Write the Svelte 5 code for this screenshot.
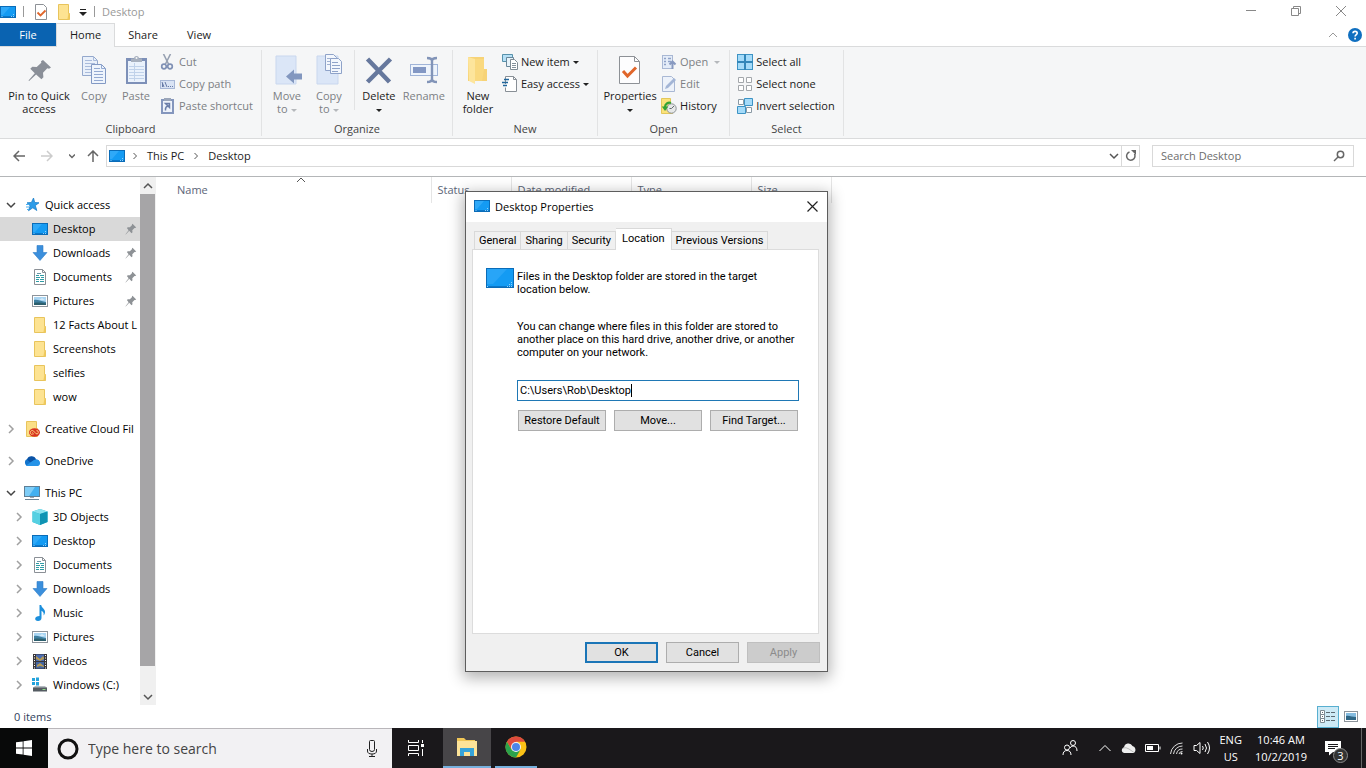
<script>
	// --------------- Sidebar ---------------
	let navGroups = [
		{
			name: 'Quick access', icon: 'star', open: true,
			items: [
				{ name: 'Desktop', icon: 'desktop', pinned: true, selected: true },
				{ name: 'Downloads', icon: 'download', pinned: true },
				{ name: 'Documents', icon: 'document', pinned: true },
				{ name: 'Pictures', icon: 'picture', pinned: true },
				{ name: '12 Facts About L', icon: 'folder' },
				{ name: 'Screenshots', icon: 'folder' },
				{ name: 'selfies', icon: 'folder' },
				{ name: 'wow', icon: 'folder' }
			]
		},
		{ name: 'Creative Cloud Fil', icon: 'creative', open: false, items: [] },
		{ name: 'OneDrive', icon: 'onedrive', open: false, items: [] },
		{
			name: 'This PC', icon: 'pc', open: true,
			items: [
				{ name: '3D Objects', icon: 'cube', expands: true },
				{ name: 'Desktop', icon: 'desktop', expands: true },
				{ name: 'Documents', icon: 'document', expands: true },
				{ name: 'Downloads', icon: 'download', expands: true },
				{ name: 'Music', icon: 'music', expands: true },
				{ name: 'Pictures', icon: 'picture', expands: true },
				{ name: 'Videos', icon: 'video', expands: true },
				{ name: 'Windows (C:)', icon: 'drive', expands: true }
			]
		}
	];
	// ---------------------------------------

	// --------------- Dialog ----------------
	let dialogTabs = ['General', 'Sharing', 'Security', 'Location', 'Previous Versions'];
	let activeTab = $state('Location');
	let path = $state('C:\\Users\\Rob\\Desktop');
	// ---------------------------------------
</script>

{#snippet icon(name)}
	{#if name === 'desktop'}
		<svg width="16" height="16" viewBox="0 0 16 16">
			<rect x="0.5" y="2.5" width="15" height="11" fill="#149bf3" stroke="#0a6cb8" />
			<path d="M1 3h9L3 11H1z" fill="#2fa9f8" />
			<path d="M1 12.5h14" stroke="#0c77c8" />
			<path d="M1.500 12.500h1M11 12.500h1M13 12.500h1M13 10.500h1" stroke="#8fd0fb" />
		</svg>
	{:else if name === 'star'}
		<svg width="16" height="16" viewBox="0 0 16 16">
			<path d="M9.500 1l1.200 4.500 4.300.3-3.700 2.700 1.500 5-4-2.700-4.300 2.900 1.600-4.900L3 5.800l4.400-.3z" fill="#2d9ce8" stroke="#1c7fc9" stroke-width=".8" />
			<path d="M2 7.500h3M2 10h3M3 12.500h2" stroke="#4db0ef" />
		</svg>
	{:else if name === 'download'}
		<svg width="16" height="16" viewBox="0 0 16 16">
			<path d="M5 .5h6v7h4L8 15.500 1 7.500h4z" fill="#3b8fdc" stroke="#2f7dc8" stroke-width=".6" />
		</svg>
	{:else if name === 'document'}
		<svg width="16" height="16" viewBox="0 0 16 16">
			<path d="M2.500.5h8l3 3v12h-11z" fill="#fff" stroke="#8b9096" />
			<path d="M10.500.5v3h3" fill="none" stroke="#8b9096" />
			<path d="M4 6.500h3M8 6.500h4M4 8.500h4M9 8.500h3M4 10.500h3M8 10.500h4M4 12.500h3M8 12.500h4" stroke="#2f9ca5" />
			<path d="M5 4.500h4" stroke="#6c97a5" />
		</svg>
	{:else if name === 'picture'}
		<svg width="16" height="16" viewBox="0 0 16 16">
			<rect x=".5" y="2.500" width="15" height="11" fill="#fff" stroke="#8d949b" />
			<rect x="2" y="4" width="12" height="8" fill="#a9d5f2" />
			<path d="M2 7c3-1 6 1 12 2v3H2z" fill="#3e7fa0" />
			<path d="M2 10c4-1 8 0 12 .5V12H2z" fill="#2c5f6d" />
			<path d="M7 6.500l3-1 3 1z" fill="#fff" />
		</svg>
	{:else if name === 'folder'}
		<svg width="16" height="16" viewBox="0 0 16 16">
			<path d="M2.500.5h10v9h1v6h-11z" fill="#fbdf86" stroke="#e8c45c" />
			<path d="M3 1h9v9l-1 5H3z" fill="#fde392" />
			<path d="M12.500 9.500h1v6h-2z" fill="#f0c95d" />
		</svg>
	{:else if name === 'creative'}
		<svg width="16" height="16" viewBox="0 0 16 16">
			<path d="M2.500.5h10v7h1v8h-11z" fill="#fbdf86" stroke="#e8c45c" />
			<ellipse cx="10.500" cy="11.500" rx="5.500" ry="4.200" fill="#d93420" />
			<path d="M8.500 13.500a2 2 0 1 1 1.200-3.400l2.300 2.600a1.600 1.600 0 1 0 .4-3M8 11.500l1.800 1.600" fill="none" stroke="#fbdf86" stroke-width=".9" />
		</svg>
	{:else if name === 'onedrive'}
		<svg width="16" height="16" viewBox="0 0 16 16">
			<path d="M4 13a3.600 3.600 0 0 1-.5-7A4.800 4.800 0 0 1 12 6.500a3.300 3.300 0 0 1 1 6.500z" fill="#1173cc" />
			<path d="M3 6.500A4.800 4.800 0 0 1 12 6.300L6.500 9.500z" fill="#0a52a5" />
			<path d="M2 12.500l8-5.500c3-1.500 6 .5 6 3a3 3 0 0 1-3 3H4q-1 0-2-.5z" fill="#2593e8" />
		</svg>
	{:else if name === 'pc'}
		<svg width="16" height="16" viewBox="0 0 16 16">
			<rect x=".5" y="1.500" width="15" height="10" fill="#42b0f0" stroke="#5f7f96" />
			<path d="M1 2h10L5 11H1z" fill="#7fcdf7" />
			<path d="M6 12.500h4" stroke="#9aa7b1" />
			<path d="M1 14.500h14" stroke="#6d8596" />
		</svg>
	{:else if name === 'cube'}
		<svg width="16" height="16" viewBox="0 0 16 16">
			<path d="M8 0l7.500 2.500V13L8 16 .5 13V2.500z" fill="#22b5cf" />
			<path d="M.5 2.500L8 0l7.500 2.500L8 5z" fill="#8be3ef" />
			<path d="M.5 2.500L8 5v11L.5 13z" fill="#55d0e2" />
			<path d="M8 5l7.500-2.500V13L8 16z" fill="#0f93b3" />
		</svg>
	{:else if name === 'music'}
		<svg width="16" height="16" viewBox="0 0 16 16">
			<path d="M7.500 0h1.700c.3 3 4.300 4 3.800 7.500-.2 1.500-1 2.500-1.500 3 .8-2.500-.5-4-2-4.700V13c0 1.700-1.500 3-3.500 3S3 15 3.200 13.500 5 11 7.500 11z" fill="#1c8fdc" />
		</svg>
	{:else if name === 'video'}
		<svg width="16" height="16" viewBox="0 0 16 16">
			<rect x="1" y="1" width="14" height="15" fill="#39373a" />
			<rect x="4" y="1.500" width="8" height="6.500" fill="#4a6cb3" />
			<rect x="4" y="9" width="8" height="6.500" fill="#4366a4" />
			<path d="M4 3l4 3 3-3 1 2v1l-4 2-4-2zM5 12l3-2 4 3v1l-4-1-3 1z" fill="#b59a55" />
			<path d="M2.500 2v14M13.500 2v14" stroke="#fff" stroke-dasharray="1 1.500" />
		</svg>
	{:else if name === 'drive'}
		<svg width="16" height="16" viewBox="0 0 16 16">
			<path d="M0 1h3v3H0zM4 .5h3V4H4zM0 5h3v3H0zM4 5h3v3.500H4z" fill="#24a3dc" />
			<path d="M3 9h10l2 2H1z" fill="#b6bcc2" />
			<rect x="1" y="10.500" width="14" height="4" fill="#555c62" />
			<rect x="10.500" y="12" width="3" height="1" fill="#8fe08a" />
		</svg>
	{:else if name === 'pin'}
		<svg width="12" height="12" viewBox="0 0 16 16">
			<path d="M10 1l5 5-1.500.8-.8-.3-3 3 .3 2.700-1.300 1.300L5.600 10.400 1 15.200l-.3-.2L4.800 9.600 2.500 6.800l1.300-1.200 2.700.2 3-3L9.200 2z" fill="#8e9296" />
		</svg>
	{:else if name === 'bigpin'}
		<svg width="32" height="32" viewBox="0 0 32 32">
			<path d="M20 6l8 7.500-2 1.200-1.700-.4-4.300 4.500.4 4.400-2 2-5.300-4.800-7 6.600-.6-.4 6.300-7.400-4.500-4.500 2-2 4.400.4 4.600-4.300-.3-1.600z" fill="#8a8f98" />
		</svg>
	{:else if name === 'copy'}
		<svg width="32" height="32" viewBox="0 0 32 32">
			<path d="M4.500 2.500h11l4 4v15h-15z" fill="#e9f0fa" stroke="#94a8cc" />
			<path d="M15.500 2.500v4h4M7 6.500h7M7 9.500h10M7 12.500h10M7 15.500h10M7 18.500h10" fill="none" stroke="#a9bbdb" />
			<path d="M13.500 10.500h10l4 4v15h-14z" fill="#eef4fc" stroke="#8299c4" />
			<path d="M23.500 10.500v4h4M16 14.500h6M16 17.500h9M16 20.500h9M16 23.500h9M16 26.500h9" fill="none" stroke="#93a9d1" />
		</svg>
	{:else if name === 'paste'}
		<svg width="32" height="32" viewBox="0 0 32 32">
			<rect x="6" y="4" width="21" height="26" fill="#7d90b8" />
			<rect x="8" y="7" width="17" height="21" fill="#eaf2fc" />
			<path d="M9 12.500h15M9 15.500h15M9 18.500h15M9 21.500h15M9 24.500h15M14.500 9v18" stroke="#c0d2ea" />
			<path d="M11 8V4.500h3a2.500 2.500 0 0 1 5 0h3V8z" fill="#a7b0be" />
			<circle cx="16.500" cy="4" r="1" fill="#f5f6f7" />
		</svg>
	{:else if name === 'cut'}
		<svg width="16" height="16" viewBox="0 0 16 16">
			<path d="M3.500 0l5.500 11M10.500 0L5 11" stroke="#97a1b2" stroke-width="1.600" fill="none" />
			<circle cx="4" cy="12.500" r="2.300" fill="none" stroke="#8091b5" stroke-width="1.700" />
			<circle cx="10" cy="12.500" r="2.300" fill="none" stroke="#8091b5" stroke-width="1.700" />
		</svg>
	{:else if name === 'copypath'}
		<svg width="16" height="16" viewBox="0 0 16 16">
			<rect x=".5" y="4.500" width="14" height="8" fill="#d9e3f4" stroke="#a7b7d6" />
			<path d="M2 6l2 5M5 6l2 5M2.500 11V7" stroke="#6579a6" fill="none" />
			<path d="M8 10.500h1M10 10.500h1M12 10.500h1" stroke="#6579a6" />
		</svg>
	{:else if name === 'pasteshortcut'}
		<svg width="16" height="16" viewBox="0 0 16 16">
			<rect x="1" y="1" width="13" height="15" fill="#8496bd" />
			<rect x="3" y="3" width="9" height="11" fill="#eef3fb" />
			<rect x="4" y="0" width="7" height="3" fill="#9ba6b9" />
			<path d="M5.500 12.500c-.5-3 1-4.500 3-4.500M5.500 5.500h4v4z" stroke="#6b7ea9" stroke-width="1.500" fill="#6b7ea9" fill-opacity=".3" />
		</svg>
	{:else if name === 'moveto'}
		<svg width="32" height="32" viewBox="0 0 32 32">
			<path d="M5 2h20v28H5z" fill="#dbe6f7" stroke="#c9d7ee" />
			<path d="M15 22.500l8-7v4h8v6h-8v4z" fill="#8297bf" />
		</svg>
	{:else if name === 'copyto'}
		<svg width="32" height="32" viewBox="0 0 32 32">
			<path d="M4 2h21v28H4z" fill="#dbe6f7" stroke="#c9d7ee" />
			<path d="M12.500.5h8l3 3v13h-11z" fill="#f3f7fd" stroke="#8fa3c9" />
			<path d="M14 4.500h6M14 7.500h4M14 10.500h4" stroke="#9fb1d2" />
			<path d="M17.500 4.500h8l3 3v12h-11z" fill="#f3f7fd" stroke="#8fa3c9" />
			<path d="M19 8.500h6M19 11.500h8M19 14.500h8M19 17.500h6" stroke="#8fa3c9" />
		</svg>
	{:else if name === 'delete'}
		<svg width="32" height="32" viewBox="0 0 32 32">
			<path d="M4.500 5l22 23M27.500 5l-23 23" stroke="#66789d" stroke-width="4.500" />
		</svg>
	{:else if name === 'rename'}
		<svg width="32" height="32" viewBox="0 0 32 32">
			<rect x="2.500" y="10.500" width="27" height="11" fill="#eef4fc" stroke="#a0b4d8" />
			<rect x="5" y="13" width="13" height="6" fill="#8297c4" />
			<path d="M19 4q5 0 5 3v18q0 3-5 3M29 4q-5 0-5 3M29 28q-5 0-5-3" stroke="#8294b8" stroke-width="2.400" fill="none" />
		</svg>
	{:else if name === 'newfolder'}
		<svg width="32" height="32" viewBox="0 0 32 32">
			<path d="M6 3h16v12h3v12H6z" fill="#f7d377" />
			<path d="M6 3l7 2v25l-6-3z" fill="#fde59c" />
			<path d="M13 5h9v11l-2 11h-7z" fill="#fad97f" />
		</svg>
	{:else if name === 'newitem'}
		<svg width="16" height="16" viewBox="0 0 16 16">
			<path d="M.5.5h10v7H.5z" fill="#b6e0f6" stroke="#5791ab" />
			<path d="M4.500 3.500h7v9h-7z" fill="#e7f3fa" stroke="#68879a" />
			<path d="M8.500 5.500h4l3 3v7h-7z" fill="#fff" stroke="#7f8b94" />
			<path d="M10 9.500h4M10 11.500h4M10 13.500h4" stroke="#84919b" />
		</svg>
	{:else if name === 'easyaccess'}
		<svg width="16" height="16" viewBox="0 0 16 16">
			<path d="M3.500 8V.5h8l3 3v12h-11v-4" fill="#fff" stroke="#888f96" />
			<path d="M11.500.5v3h3" fill="none" stroke="#888f96" />
			<path d="M2 3.500h5M0 6.500h6M1 9.500h4" stroke="#23679c" stroke-width="1.500" />
		</svg>
	{:else if name === 'properties'}
		<svg width="32" height="32" viewBox="0 0 32 32">
			<path d="M5.500 2.500h15l5 5v22h-20z" fill="#fdfdfe" stroke="#8d9196" />
			<path d="M20.500 2.500v5h5" fill="none" stroke="#8d9196" />
			<path d="M9 17l4.500 5L22 13.500" fill="none" stroke="#e0662b" stroke-width="3" />
		</svg>
	{:else if name === 'check'}
		<svg width="16" height="16" viewBox="0 0 16 16">
			<path d="M2.500.5h8l3 3v12h-11z" fill="#fff" stroke="#8d9196" />
			<path d="M4.500 8.500l3 3 5-5" fill="none" stroke="#e0662b" stroke-width="1.800" />
		</svg>
	{:else if name === 'open'}
		<svg width="16" height="16" viewBox="0 0 16 16">
			<rect x="1.500" y="1.500" width="10" height="13" fill="#e4ecf8" stroke="#a9b8d4" />
			<path d="M3 4.500h2M3 7.500h2M3 10.500h2M7 4.500h3M7 7.500h3" stroke="#8fa2c8" stroke-width="1.500" />
			<path d="M11.500 15V8M8.500 10.500l3-3 3 3" fill="none" stroke="#8799c0" stroke-width="2" />
		</svg>
	{:else if name === 'edit'}
		<svg width="16" height="16" viewBox="0 0 16 16">
			<path d="M1.500.5h9l3 3v12h-12z" fill="#edf2fa" stroke="#a9b8d4" />
			<path d="M4 13l1-3 8-8 2 2-8 8z" fill="#a3b5d6" />
		</svg>
	{:else if name === 'history'}
		<svg width="16" height="16" viewBox="0 0 16 16">
			<path d="M.5.5h9v9h2v6H.5z" fill="#fbe27a" stroke="#e3c75b" />
			<circle cx="10.500" cy="10.500" r="4.700" fill="#e6e8e8" stroke="#8b9194" />
			<path d="M10.500 10.500l2.500-2.500M10.500 10.500h-2" stroke="#62696c" fill="none" />
			<path d="M10 5c-3-1-6 1-6 4" fill="none" stroke="#34a335" stroke-width="2.200" />
			<path d="M.8 8.500h6.500L4 13z" fill="#34a335" />
		</svg>
	{:else if name === 'selectall'}
		<svg width="16" height="16" viewBox="0 0 16 16">
			<rect x=".5" y=".5" width="15" height="15" fill="#a5dbf9" stroke="#3d93c4" />
			<path d="M8 0v16M0 8h16" stroke="#3387ba" stroke-width="2" />
		</svg>
	{:else if name === 'selectnone'}
		<svg width="16" height="16" viewBox="0 0 16 16">
			<path d="M1.500 1.500h5v5h-5zM9.500 1.500h5v5h-5zM1.500 9.500h5v5h-5zM9.500 9.500h5v5h-5z" fill="#fff" stroke="#a3a7ab" />
		</svg>
	{:else if name === 'invert'}
		<svg width="16" height="16" viewBox="0 0 16 16">
			<path d="M1.500 1.500h5v5h-5zM9.500 9.500h5v5h-5z" fill="#fff" stroke="#8b9aa5" />
			<path d="M7.500.5h8v7h-8zM.5 8.500h8v7h-8z" fill="#a5dbf9" stroke="#3d93c4" />
		</svg>
	{/if}
{/snippet}

{#snippet chevron(dir)}
	<svg class="chevron" width="10" height="10" viewBox="0 0 10 10">
		{#if dir === 'down'}
			<path d="M1 3l4 4 4-4" />
		{:else if dir === 'up'}
			<path d="M1 7l4-4 4 4" />
		{:else}
			<path d="M3 1l4 4-4 4" />
		{/if}
	</svg>
{/snippet}

{#snippet big(name, first, second, caret, size)}
	<button class="big {size}">
		{@render icon(name)}
		<span>{first}</span>
		<span>{second}{#if caret}<i class="caret"></i>{/if}</span>
	</button>
{/snippet}

{#snippet small(name, label, caret, off)}
	<button class="small" class:off>
		{@render icon(name)}
		<span>{label}</span>
		{#if caret}<i class="caret"></i>{/if}
	</button>
{/snippet}

<div class="screen">
	<!-- Title bar -->
	<header class="titlebar">
		<div class="quick">
			{@render icon('desktop')}
			<span class="bar"></span>
			{@render icon('check')}
			{@render icon('folder')}
			<svg width="8" height="8" viewBox="0 0 8 8"><path d="M1 1.500h6" stroke="#222" /><path d="M0 4h8L4 8z" fill="#222" /></svg>
			<span class="bar"></span>
			<span class="window-name">Desktop</span>
		</div>
		<div class="window-buttons">
			<button aria-label="Minimize"><svg width="10" height="10" viewBox="0 0 10 10"><path d="M0 4.500h10" /></svg></button>
			<button aria-label="Restore"><svg width="10" height="10" viewBox="0 0 10 10"><path d="M.5 2.500h7v7h-7zM2.500 2.500v-2h7v7h-2" /></svg></button>
			<button aria-label="Close"><svg width="10" height="10" viewBox="0 0 10 10"><path d="M0 0l10 10M10 0L0 10" /></svg></button>
		</div>
	</header>

	<!-- Ribbon -->
	<nav class="tabs">
		<button class="file">File</button>
		<button class="active">Home</button>
		<button>Share</button>
		<button>View</button>
		<div class="tabs-right">
			{@render chevron('up')}
			<svg width="14" height="14" viewBox="0 0 14 14">
				<circle cx="7" cy="7" r="7" fill="#0f6fc0" />
				<path d="M5 5.200C5 2.800 9.200 2.800 9.200 5.200 9.200 6.600 7.100 6.500 7.100 8.500M7.100 9.800v1.600" fill="none" stroke="#fff" stroke-width="1.600" />
			</svg>
		</div>
	</nav>

	<section class="ribbon">
		<div class="group">
			<div class="tools clipboard">
				{@render big('bigpin', 'Pin to Quick', 'access', false, 'wide')}
				{@render big('copy', 'Copy', '', false, 'off')}
				{@render big('paste', 'Paste', '', false, 'off')}
				<div class="stack">
					{@render small('cut', 'Cut', false, true)}
					{@render small('copypath', 'Copy path', false, true)}
					{@render small('pasteshortcut', 'Paste shortcut', false, true)}
				</div>
			</div>
			<h2>Clipboard</h2>
		</div>
		<div class="group">
			<div class="tools organize">
				{@render big('moveto', 'Move', 'to', true, 'off')}
				{@render big('copyto', 'Copy', 'to', true, 'off')}
				<span class="rule"></span>
				{@render big('delete', 'Delete', '', true, '')}
				{@render big('rename', 'Rename', '', false, 'off mid')}
			</div>
			<h2>Organize</h2>
		</div>
		<div class="group">
			<div class="tools">
				{@render big('newfolder', 'New', 'folder', false, '')}
				<div class="stack">
					{@render small('newitem', 'New item', true, false)}
					{@render small('easyaccess', 'Easy access', true, false)}
				</div>
			</div>
			<h2>New</h2>
		</div>
		<div class="group">
			<div class="tools open">
				{@render big('properties', 'Properties', '', true, 'props')}
				<div class="stack">
					{@render small('open', 'Open', true, true)}
					{@render small('edit', 'Edit', false, true)}
					{@render small('history', 'History', false, false)}
				</div>
			</div>
			<h2>Open</h2>
		</div>
		<div class="group">
			<div class="tools">
				<div class="stack">
					{@render small('selectall', 'Select all', false, false)}
					{@render small('selectnone', 'Select none', false, false)}
					{@render small('invert', 'Invert selection', false, false)}
				</div>
			</div>
			<h2>Select</h2>
		</div>
	</section>

	<!-- Address bar -->
	<div class="address-row">
		<button class="nav" aria-label="Back"><svg width="12" height="12" viewBox="0 0 12 12"><path d="M12 6H1M6 1L1 6l5 5" /></svg></button>
		<button class="nav dim" aria-label="Forward"><svg width="12" height="12" viewBox="0 0 12 12"><path d="M0 6h11M6 1l5 5-5 5" /></svg></button>
		<button class="nav recent" aria-label="Recent locations"><svg width="6" height="6" viewBox="0 0 6 6"><path d="M0 1.500l3 3 3-3" /></svg></button>
		<button class="nav upward" aria-label="Up"><svg width="12" height="12" viewBox="0 0 12 12"><path d="M6 12V1M1 6l5-5 5 5" /></svg></button>
		<div class="address">
			{@render icon('desktop')}
			<svg class="crumb" width="4" height="6" viewBox="0 0 4 6"><path d="M.5 0l3 3-3 3" /></svg>
			<a href="#this-pc">This PC</a>
			<svg class="crumb" width="4" height="6" viewBox="0 0 4 6"><path d="M.5 0l3 3-3 3" /></svg>
			<a href="#desktop">Desktop</a>
			<button class="history" aria-label="Previous locations">{@render chevron('down')}</button>
			<button class="refresh" aria-label="Refresh">
				<svg width="12" height="12" viewBox="0 0 12 12"><path d="M9.500 4a4.200 4.200 0 1 1-5-2" fill="none" stroke="#666" stroke-width="1.500" /><path d="M6 0h5v5z" fill="#666" /></svg>
			</button>
		</div>
		<label class="search">
			<input type="text" placeholder="Search Desktop" aria-label="Search Desktop" />
			<svg width="12" height="12" viewBox="0 0 12 12"><circle cx="7.500" cy="4.500" r="3.200" /><path d="M5 7L1 11" /></svg>
		</label>
	</div>

	<!-- Explorer body -->
	<main>
		<aside>
			{#each navGroups as group}
				<div class="nav-group">
					<a class="nav-row" href="#nav">
						<span class="toggle" class:open={group.open}>{@render chevron(group.open ? 'down' : 'right')}</span>
						{@render icon(group.icon)}
						<span class="label">{group.name}</span>
					</a>
					{#each group.items as item}
						<a class="nav-row child" class:selected={item.selected} href="#nav">
							<span class="toggle">{#if item.expands}{@render chevron('right')}{/if}</span>
							{@render icon(item.icon)}
							<span class="label">{item.name}</span>
							{#if item.pinned}<span class="pinned">{@render icon('pin')}</span>{/if}
						</a>
					{/each}
				</div>
			{/each}
		</aside>
		<div class="scrollbar">
			<button aria-label="Scroll up">{@render chevron('up')}</button>
			<div class="track"><div class="thumb"></div></div>
			<button aria-label="Scroll down">{@render chevron('down')}</button>
		</div>
		<div class="files">
			<table>
				<thead>
					<tr>
						<th class="name">Name<span class="sort">{@render chevron('up')}</span></th>
						<th class="status-col">Status</th>
						<th>Date modified</th>
						<th>Type</th>
						<th class="size-col">Size</th>
						<th class="rest"></th>
					</tr>
				</thead>
			</table>
		</div>
	</main>

	<footer class="status">
		<span>0 items</span>
		<div class="views">
			<button class="on" aria-label="Details">
				<svg width="16" height="14" viewBox="0 0 16 14">
					<path d="M.5.5h4v4h-4zM.5 4.500h4v4h-4zM.5 8.500h4v4h-4z" fill="#fff" stroke="#7d8a92" />
					<path d="M2 2.500h1M2 6.500h1M2 10.500h1M6 2.500h4M11 2.500h4M6 6.500h4M11 6.500h4M6 10.500h4M11 10.500h4" stroke="#5d6a72" />
				</svg>
			</button>
			<button aria-label="Large icons">
				<svg width="14" height="12" viewBox="0 0 14 12">
					<rect x=".5" y=".5" width="13" height="10" fill="#fff" stroke="#8d949b" />
					<rect x="2" y="2" width="10" height="7" fill="#85bce0" />
					<path d="M2 5c3-1 6 1 10 1v3H2z" fill="#2f6685" />
				</svg>
			</button>
		</div>
	</footer>

	<!-- Taskbar -->
	<div class="taskbar">
		<button class="start" aria-label="Start">
			<svg width="16" height="16" viewBox="0 0 16 16"><path d="M0 2.300L6.700 1.400V7.600H0zM7.500 1.300L16 0v7.600H7.500zM0 8.400h6.700v6.200L0 13.700zM7.500 8.400H16V16l-8.500-1.200z" fill="#fff" /></svg>
		</button>
		<label class="cortana">
			<svg width="22" height="22" viewBox="0 0 22 22"><circle cx="11" cy="11" r="9" fill="none" stroke="#111" stroke-width="3" /></svg>
			<input type="text" placeholder="Type here to search" aria-label="Type here to search" />
			<svg class="mic" width="12" height="18" viewBox="0 0 12 18"><path d="M3.500 1.500q0-1 1-1h3q1 0 1 1v8q0 2-2.500 2t-2.500-2zM1.500 9v2q0 3 4.500 3t4.500-3V9M6 14v2.500M3 16.500h6" fill="none" stroke="#222" /></svg>
		</label>
		<button class="task" aria-label="Task view">
			<svg width="18" height="16" viewBox="0 0 18 16"><path d="M1.500 0v2.500h10V0M1.500 5.500h10v5h-10zM1.500 16v-2.500h10V16M15.500 0v3M15.500 9v7" fill="none" stroke="#fff" /><rect x="14" y="4" width="3" height="3" fill="#fff" /></svg>
		</button>
		<button class="task current" aria-label="File Explorer">
			<svg width="22" height="20" viewBox="0 0 22 20">
				<path d="M1 1h7l2 2h9v16H1z" fill="#f0c657" />
				<path d="M1 4h20v15H1z" fill="#fde398" />
				<path d="M4 19v-8h14v8h-4v-4H8v4z" fill="#36a3d8" />
			</svg>
		</button>
		<button class="task running" aria-label="Chrome">
			<svg width="22" height="22" viewBox="0 0 22 22">
				<circle cx="11" cy="11" r="10.500" fill="#fbc116" />
				<path d="M1.900 5.750A10.500 10.500 0 0 1 20.100 5.750H11L6.500 13.600z" fill="#dd4b3e" />
				<path d="M1.900 5.750A10.500 10.500 0 0 0 11 21.500L15.500 13.600H6.500z" fill="#2ba24c" />
				<circle cx="11" cy="11" r="5" fill="#f4f4f4" />
				<circle cx="11" cy="11" r="4" fill="#4a86e8" />
			</svg>
		</button>

		<div class="tray">
			<svg width="16" height="16" viewBox="0 0 16 16"><circle cx="5" cy="7.500" r="2.500" /><path d="M1 15q0-4.500 4-4.500t4 4.500" /><circle cx="11" cy="3" r="2.500" /><path d="M8 8q1-2 3-2 4 0 4 5" /></svg>
			<svg class="tray-up" width="12" height="12" viewBox="0 0 12 12"><path d="M.5 9L6 3.500 11.500 9" /></svg>
			<svg width="16" height="16" viewBox="0 0 16 16"><path d="M3 13a2.800 2.800 0 0 1 0-5.500A4.500 4.500 0 0 1 11.500 6a4 4 0 0 1 1.500 7z" fill="#eee" stroke="none" /><path d="M2 8q3-1 6 1l5 3.500" stroke="#bbb" /></svg>
			<svg width="16" height="16" viewBox="0 0 16 16"><path d="M.5 4.500h13v7H.5zM15 6.500v3" /><path d="M2 6h6v4H2z" fill="#fff" stroke="none" /></svg>
			<svg width="16" height="16" viewBox="0 0 16 16"><path d="M1.500 14A12 12 0 0 1 13.500 3M4.500 14A9 9 0 0 1 13.500 6M7.500 14a6 6 0 0 1 6-5M10 14a3.500 3.500 0 0 1 3.500-2.500" stroke="#ddd" /><circle cx="12.500" cy="13.500" r="1" fill="#fff" stroke="none" /></svg>
			<svg width="18" height="16" viewBox="0 0 18 16"><path d="M1 5.500h2.500L7 2.500v11L3.500 10.500H1zM9.500 6q1.500 2 0 4M12 4q3 4 0 8M14.500 2q4 6 0 12" /></svg>
			<div class="lang"><span>ENG</span><span>US</span></div>
			<div class="clock"><span>10:46 AM</span><span>10/2/2019</span></div>
			<button class="notes" aria-label="3 notifications">
				<svg width="16" height="16" viewBox="0 0 16 16"><path d="M0 1h16v11H8l-4 3.500V12H0z" fill="#fff" stroke="none" /><path d="M3 4.500h10M3 6.500h10M3 8.500h7" stroke="#1a181b" /></svg>
				<span class="count">3</span>
			</button>
		</div>
	</div>

	<!-- Desktop Properties -->
	<div class="dialog" role="dialog" aria-label="Desktop Properties">
		<div class="dialog-title">
			{@render icon('desktop')}
			<span>Desktop Properties</span>
			<button aria-label="Close dialog"><svg width="11" height="11" viewBox="0 0 11 11"><path d="M.5.5l10 10M10.500.5l-10 10" stroke="#222" stroke-width="1.200" /></svg></button>
		</div>
		<div class="dialog-body">
			<div class="dialog-tabs">
				{#each dialogTabs as tab}
					<button class:active={tab === activeTab} onclick={() => (activeTab = tab)}>{tab}</button>
				{/each}
			</div>
			<div class="panel">
				<svg width="28" height="20" viewBox="0 0 28 20">
					<rect x=".5" y=".5" width="27" height="19" fill="#149bf3" stroke="#0a6cb8" />
					<path d="M1 1h20L7 16H1z" fill="#28a5f7" />
					<path d="M1 18.500h26" stroke="#0c77c8" />
					<path d="M1 18.500h1M21 18.500h1M23 18.500h1M25 18.500h1M23 16.500h1M25 16.500h1M25 14.500h1" stroke="#8fd0fb" />
				</svg>
				<div class="panel-content">
					<p>Files in the Desktop folder are stored in the target<br />location below.</p>
					<p>You can change where files in this folder are stored to<br />another place on this hard drive, another drive, or another<br />computer on your network.</p>
					<label class="path">
						<input type="text" aria-label="Target location" bind:value={path} />
						<span class="text-caret"></span>
					</label>
					<div class="panel-buttons">
						<button>Restore Default</button>
						<button>Move...</button>
						<button>Find Target...</button>
					</div>
				</div>
			</div>
			<div class="dialog-buttons">
				<button class="ok">OK</button>
				<button>Cancel</button>
				<button disabled>Apply</button>
			</div>
		</div>
	</div>
</div>

<style>
	:global(body) {
		margin: 0;
		background: #fff;
	}

	.screen {
		position: relative;
		display: flex;
		flex-direction: column;
		min-height: 100vh;
		font-family: 'Open Sans', 'Noto Sans', sans-serif;
		font-size: 11px;
		line-height: 13px;
		color: #1b1b1b;
		overflow: hidden;
	}

	.screen * {
		box-sizing: border-box;
	}

	svg {
		display: block;
		flex: none;
	}

	button,
	input {
		font: inherit;
		color: inherit;
		margin: 0;
		padding: 0;
		border: none;
		background: none;
		outline: none;
	}

	a {
		color: inherit;
		text-decoration: none;
	}

	h2,
	p {
		margin: 0;
		font-size: inherit;
		font-weight: normal;
	}

	.chevron {
		fill: none;
		stroke: #555;
		stroke-width: 1.5;
	}

	/* --------------- Title bar --------------- */
	.titlebar {
		display: flex;
		justify-content: space-between;
		height: 23px;
	}

	.quick {
		display: flex;
		align-items: center;
		gap: 7px;
	}

	.quick .bar {
		width: 1px;
		height: 11px;
		margin-right: 2px;
		background: #999;
	}

	.quick .window-name {
		color: #999;
	}

	.quick .bar:nth-of-type(2) {
		margin: 0;
	}

	.window-buttons {
		display: flex;
		padding-right: 3px;
	}

	.window-buttons button {
		display: grid;
		place-items: center;
		width: 45px;
		height: 21px;
	}

	.window-buttons svg {
		fill: none;
		stroke: #888;
	}

	/* --------------- Ribbon --------------- */
	.tabs {
		display: flex;
		height: 24px;
		border-bottom: 1px solid #dadbdc;
	}

	.tabs button {
		min-width: 56px;
		padding: 0 12px 2px;
		border: 1px solid transparent;
		border-bottom: none;
	}

	.tabs .file {
		background: #0a63b1;
		color: #fff;
	}

	.tabs .active {
		height: 24px;
		padding: 0 13px 2px;
		background: #f5f6f7;
		border-color: #dadbdc;
	}

	.tabs-right {
		display: flex;
		align-items: center;
		gap: 10px;
		margin-left: auto;
		padding-right: 4px;
	}

	.tabs-right .chevron {
		stroke: #999;
		stroke-width: 1;
	}

	.ribbon {
		display: flex;
		background: #f5f6f7;
		border-bottom: 1px solid #dadbdc;
		padding: 3px 0 2px;
	}

	.group {
		display: flex;
		flex-direction: column;
		border-right: 1px solid #e2e3e4;
	}

	.group h2 {
		padding-top: 4px;
		text-align: center;
		color: #444;
		line-height: 14px;
	}

	.tools {
		display: flex;
		height: 68px;
		padding: 0 8px 0 4px;
	}

	.tools.clipboard {
		padding-left: 5px;
	}

	.tools.organize {
		padding-right: 4px;
	}

	.tools.open {
		padding-right: 9px;
	}

	.big {
		display: flex;
		flex-direction: column;
		align-items: center;
		width: 42px;
		padding-top: 4px;
		white-space: nowrap;
	}

	.big svg {
		margin-bottom: 3px;
	}

	.big span {
		height: 13px;
	}

	.wide {
		width: 68px;
	}

	.mid {
		width: 48px;
	}

	.props {
		width: 56px;
	}

	.off {
		color: #7c7f84;
	}

	.caret {
		display: inline-block;
		border: 3px solid transparent;
		border-top-color: #222;
		border-bottom: none;
		vertical-align: middle;
	}

	.off .caret {
		margin-left: 3px;
		border-top-color: #b5b8bc;
	}

	.rule {
		width: 1px;
		height: 60px;
		margin: 0 3px 0 4px;
		background: #e2e3e4;
	}

	.stack {
		display: flex;
		flex-direction: column;
		padding: 1px 0 0 3px;
	}

	.small {
		display: flex;
		align-items: center;
		gap: 3px;
		height: 22px;
		white-space: nowrap;
	}

	.small span {
		padding-bottom: 2px;
	}

	/* --------------- Address bar --------------- */
	.address-row {
		display: flex;
		align-items: center;
		height: 38px;
		padding: 0 12px 4px 5px;
		border-bottom: 1px solid #b4b6b8;
	}

	.nav {
		display: grid;
		place-items: center;
		width: 28px;
		height: 22px;
	}

	.nav svg {
		fill: none;
		stroke: #666;
		stroke-width: 1.5;
	}

	.nav.dim svg {
		stroke: #ccc;
	}

	.nav.recent {
		width: 22px;
	}

	.nav.upward {
		width: 20px;
	}

	.address {
		display: flex;
		flex: 1;
		align-items: center;
		height: 22px;
		margin-left: 3px;
		padding-left: 2px;
		border: 1px solid #d9d9d9;
	}

	.crumb {
		margin: 0 10px 0 8px;
		fill: none;
		stroke: #555;
	}

	.crumb ~ .crumb {
		margin-left: 10px;
	}

	.address .history {
		display: grid;
		place-items: center;
		width: 14px;
		margin-left: auto;
	}

	.address .refresh {
		display: grid;
		place-items: center;
		width: 18px;
		height: 20px;
		border-left: 1px solid #d9d9d9;
	}

	.search {
		display: flex;
		align-items: center;
		width: 202px;
		height: 22px;
		margin-left: 12px;
		padding: 0 8px;
		border: 1px solid #d9d9d9;
	}

	.search input {
		flex: 1;
		min-width: 0;
	}

	.search input::placeholder {
		color: #6d6d6d;
	}

	.search svg {
		fill: none;
		stroke: #666;
		stroke-width: 1.5;
	}

	/* --------------- Explorer body --------------- */
	main {
		display: flex;
		flex: 1;
	}

	aside {
		width: 140px;
		padding-top: 16px;
		overflow: hidden;
	}

	.nav-group {
		margin-bottom: 8px;
	}

	.nav-row {
		display: flex;
		align-items: center;
		height: 24px;
		padding-left: 6px;
		white-space: nowrap;
	}

	.nav-row.child {
		padding-left: 14px;
	}

	.nav-row .toggle {
		width: 10px;
		height: 10px;
		margin-right: 8px;
	}

	.nav-row .toggle .chevron {
		stroke: #a0a0a0;
	}

	.nav-row .toggle.open .chevron {
		stroke: #444;
	}

	.nav-row .label {
		padding: 0 0 2px 5px;
		color: #000;
	}

	.nav-row.selected {
		background: #d9d9d9;
	}

	.nav-row .pinned {
		margin-left: auto;
		padding-right: 3px;
	}

	.scrollbar {
		display: flex;
		flex-direction: column;
		width: 16px;
		background: #f0f0f0;
	}

	.scrollbar button {
		display: grid;
		place-items: center;
		height: 17px;
	}

	.track {
		display: flex;
		flex: 1;
		padding-bottom: 22px;
	}

	.thumb {
		width: 15px;
		background: #a6a5a7;
	}

	.files {
		flex: 1;
	}

	table {
		width: 100%;
		table-layout: fixed;
		border-collapse: collapse;
	}

	th {
		position: relative;
		width: 120px;
		height: 26px;
		padding: 0 0 2px 6px;
		border-right: 1px solid #e5e5e5;
		text-align: left;
		font-weight: normal;
		color: #5b6577;
	}

	th.name {
		width: 275px;
		padding-left: 21px;
	}

	th.status-col,
	th.size-col {
		width: 80px;
	}

	th.rest {
		width: auto;
		border: none;
	}

	.sort {
		position: absolute;
		top: -2px;
		left: 140px;
	}

	.sort .chevron {
		stroke-width: 1;
	}

	.status {
		display: flex;
		align-items: center;
		justify-content: space-between;
		height: 23px;
		padding: 0 8px 0 14px;
		color: #31415c;
	}

	.views {
		display: flex;
		gap: 5px;
	}

	.views button {
		display: grid;
		place-items: center;
	}

	.views .on {
		width: 22px;
		height: 22px;
		background: #cdeaf6;
		border: 1px solid #58afd0;
	}

	/* --------------- Taskbar --------------- */
	.taskbar {
		display: flex;
		height: 40px;
		background: #1a181b;
	}

	.start {
		display: grid;
		place-items: center;
		width: 48px;
		background: #080909;
	}

	.cortana {
		display: flex;
		align-items: center;
		width: 344px;
		padding: 0 14px 0 9px;
		background: #f2f1f3;
		border-top: 1px solid #b9b6ba;
	}

	.cortana input {
		flex: 1;
		min-width: 0;
		padding-left: 9px;
		font-size: 14px;
		line-height: 20px;
	}

	.cortana input::placeholder {
		color: #444;
	}

	.task {
		display: grid;
		place-items: center;
		width: 48px;
	}

	.task.current {
		margin: 0 4px 0 3px;
		background: #474548;
		border-bottom: 2px solid #76b0dd;
	}

	.task.running {
		width: 42px;
		border-bottom: 2px solid #76b0dd;
	}

	.tray {
		display: flex;
		align-items: center;
		gap: 8px;
		margin-left: auto;
		padding-right: 4px;
		color: #fff;
		text-align: center;
	}

	.tray svg {
		fill: none;
		stroke: #fff;
	}

	.tray-up {
		margin: 0 2px 0 13px;
	}

	.tray div {
		display: flex;
		flex-direction: column;
		line-height: 17px;
	}

	.tray .clock {
		margin-left: 5px;
	}

	.notes {
		position: relative;
		margin-left: 10px;
		padding-right: 20px;
		border-right: 1px solid #666;
		height: 40px;
	}

	.notes .count {
		position: absolute;
		top: 20px;
		left: 8px;
		width: 15px;
		height: 15px;
		border: 1px solid #888;
		border-radius: 50%;
		background: #333;
		line-height: 13px;
	}

	/* --------------- Dialog --------------- */
	.dialog {
		position: absolute;
		top: 191px;
		left: 465px;
		width: 363px;
		border: 1px solid #5d5d5d;
		background: #f0f0f0;
		box-shadow: 0 4px 14px 2px rgba(0, 0, 0, 0.3);
	}

	.dialog-title {
		display: flex;
		align-items: center;
		height: 30px;
		padding: 0 9px 2px 8px;
		background: #fff;
	}

	.dialog-title span {
		padding-left: 5px;
		color: #000;
	}

	.dialog-title button {
		margin-left: auto;
	}

	.dialog-body {
		padding: 6px 7px 8px 6px;
		font-family: Roboto, 'Liberation Sans', sans-serif;
		color: #000;
	}

	.dialog-tabs {
		display: flex;
		align-items: flex-end;
		height: 22px;
		padding-left: 2px;
		margin-bottom: -1px;
	}

	.dialog-tabs button {
		height: 19px;
		padding: 0 4px;
		border: 1px solid #d9d9d9;
		border-left: none;
	}

	.dialog-tabs button:first-child {
		border-left: 1px solid #d9d9d9;
	}

	.dialog-tabs .active {
		position: relative;
		height: 22px;
		padding: 0 6px 2px;
		background: #fff;
		border-bottom: none;
	}

	.panel {
		display: grid;
		grid-template-columns: 28px 1fr;
		gap: 3px;
		min-height: 385px;
		margin-right: 1px;
		padding: 18px 19px 0 13px;
		background: #fff;
		border: 1px solid #dcdcdc;
	}

	.panel-content {
		padding-top: 2px;
	}

	.panel-content p {
		margin-bottom: 24px;
		white-space: nowrap;
	}

	.path {
		display: flex;
		align-items: center;
		height: 21px;
		margin-top: -3px;
		padding: 0 2px;
		border: 1px solid #1f78b5;
		cursor: text;
	}

	.path input {
		field-sizing: content;
		caret-color: transparent;
	}

	.text-caret {
		width: 1px;
		height: 13px;
		background: #000;
	}

	.panel-buttons {
		display: flex;
		gap: 8px;
		margin-top: 9px;
		padding: 0 1px;
	}

	.panel-buttons button {
		flex: 1;
	}

	.dialog-body .panel-buttons button,
	.dialog-buttons button {
		height: 21px;
		background: #e1e1e1;
		border: 1px solid #adadad;
	}

	.dialog-buttons {
		display: flex;
		justify-content: flex-end;
		gap: 8px;
		padding-top: 8px;
	}

	.dialog-buttons button {
		width: 73px;
	}

	.dialog-buttons .ok {
		border: 2px solid #1a75b7;
	}

	.dialog-buttons button:disabled {
		background: #ccc;
		border-color: #bfbfbf;
		color: #8b8b8b;
	}
</style>
